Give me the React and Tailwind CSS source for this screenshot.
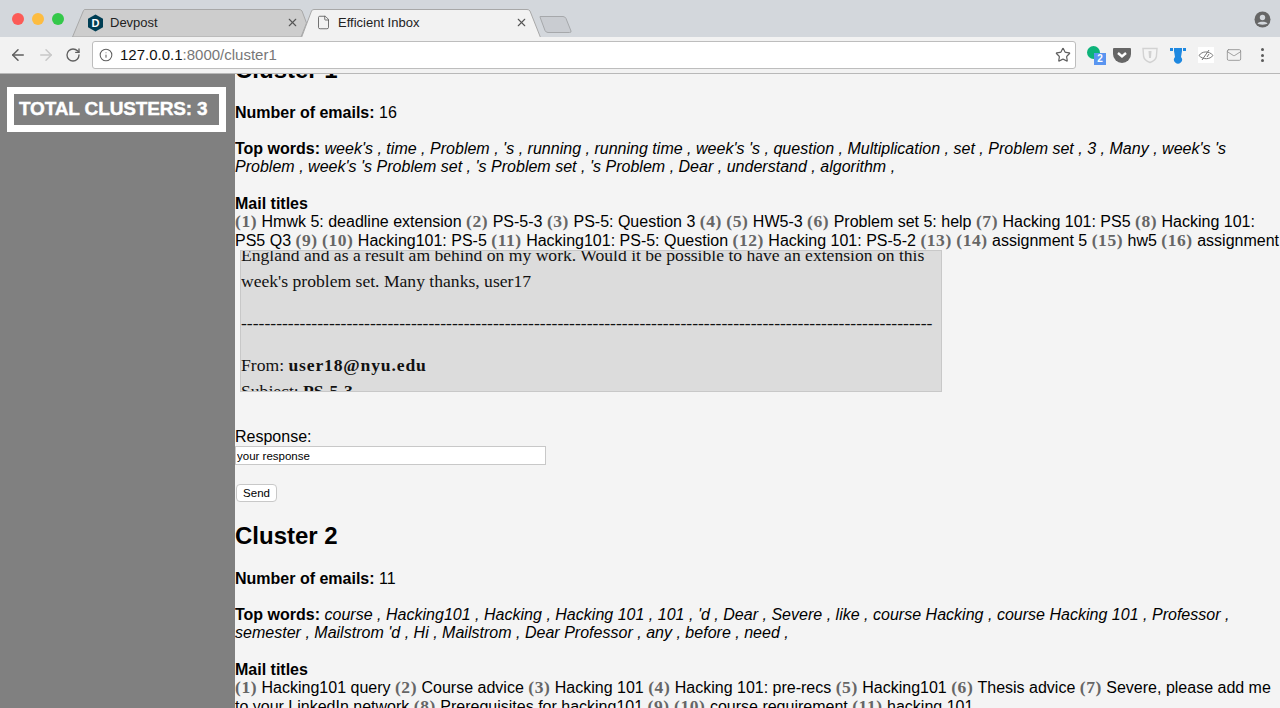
import React from "react";
import { ArrowLeft, ArrowRight, RotateCw, Info, Star, X, File, Mail } from "lucide-react";

const sans = "font-['Liberation_Sans',Arial,sans-serif]";

function Num({ n }) {
    return <b className="font-['Liberation_Serif',serif] text-[17.5px] leading-[16px] font-bold text-[#666666] tracking-[0.55px]">({n})</b>;
}

function Titles({ lines }) {
    return (
        <div className="whitespace-nowrap">
            {lines.map((line, i) => (
                <div key={i}>
                    {line.map(([n, title]) => (
                        <span key={n}><Num n={n} /> {title}{title ? " " : ""}</span>
                    ))}
                </div>
            ))}
        </div>
    );
}

function Cluster({ name, count, words, lines, children }) {
    return (
        <div>
            <h2 className="text-[24px] leading-[27.6px] font-bold">{name}</h2>
            <p className="mt-[20px]"><b>Number of emails:</b> {count}</p>
            <p className="mt-[18px]"><b>Top words:</b> <i className="tracking-[0.015px]">{words[0]}</i><br /><i className="tracking-[0.015px]">{words[1]}</i></p>
            <p className="mt-[18px]"><b>Mail titles</b></p>
            <Titles lines={lines} />
            {children}
        </div>
    );
}

function Tab({ fill, stroke, width, points, className, children }) {
    return (
        <div className={`relative h-[29px] flex items-center ${className}`} style={{ width }}>
            <svg className="absolute inset-0" width={width} height="29">
                <path d={points} fill={fill} stroke={stroke} strokeWidth="1" />
            </svg>
            {children}
        </div>
    );
}

function Extensions() {
    return (
        <div className="flex items-center w-[205px] pl-[4px] h-full">
            <div className="relative w-[28px] h-[24px]">
                <div className="absolute left-[7px] top-[3px] w-[13px] h-[13px] rounded-full bg-[#0db37a]" />
                <div className="absolute left-[14px] top-[10px] w-[12px] h-[12px] bg-[#5a95f0] text-white text-[10px] leading-[12px] text-center font-bold">2</div>
            </div>
            <svg width="28" height="24" viewBox="0 0 28 24">
                <path d="M6 5h16a1 1 0 0 1 1 1v5a9 9 0 0 1-18 0V6a1 1 0 0 1 1-1z" fill="#666" />
                <path d="M10 10l4 3.5 4-3.5" fill="none" stroke="#fff" strokeWidth="2.4" />
            </svg>
            <svg width="28" height="24" viewBox="0 0 28 24">
                <path d="M7 5.5h14l-.6 8c-.6 3-3.5 5-6.4 6-2.9-1-5.8-3-6.4-6z" fill="#f4f4f4" stroke="#d2d2d2" strokeWidth="1.4" />
                <path d="M12.500 8h3l-.5 7h-2z" fill="#d2d2d2" />
            </svg>
            <svg width="28" height="24" viewBox="0 0 28 24">
                <path d="M6 5h3v3H6zM19 5h3v3h-3zM10 5h8v3l-1 6a4 4 0 1 1-6 0l-1-6z" fill="#1e88e0" />
            </svg>
            <div className="w-[28px] flex justify-center">
                <div className="w-[16px] h-[16px] bg-white flex items-center justify-center">
                    <svg width="16" height="16" viewBox="0 0 16 16" fill="none" stroke="#777" strokeWidth="1">
                        <path d="M1 8.5c3-4.5 10-5 14 0-3 4-10 4.5-14 0z" />
                        <path d="M4 13L11 3M9 10l2-3" />
                    </svg>
                </div>
            </div>
            <div className="w-[28px] flex justify-center"><Mail size={16} strokeWidth={1.2} color="#8a8a8a" /></div>
            <div className="w-[28px] flex flex-col items-center gap-[2.5px]">
                <span className="w-[3px] h-[3px] rounded-full bg-[#5a5a5a]" />
                <span className="w-[3px] h-[3px] rounded-full bg-[#5a5a5a]" />
                <span className="w-[3px] h-[3px] rounded-full bg-[#5a5a5a]" />
            </div>
        </div>
    );
}

function BrowserBar() {
    return (
        <div className={`${sans} h-[74px] shrink-0 flex flex-col`}>
            <div className="h-[37px] bg-[#d3d7dc] flex items-end relative">
                <div className="flex gap-[8px] pl-[12px] self-start pt-[13px] w-[72px]">
                    <span className="w-[12px] h-[12px] shrink-0 rounded-full bg-[#fc5b57]" />
                    <span className="w-[12px] h-[12px] shrink-0 rounded-full bg-[#fdbc40]" />
                    <span className="w-[12px] h-[12px] shrink-0 rounded-full bg-[#34c84a]" />
                </div>
                <Tab width={235} fill="#cdcdcd" stroke="#a8a8a8" points="M0.5 29 L11.5 2.5 Q12 1.5 13 1.5 H227 Q229 1.5 230 3 L234.500 15 L229 29 Z">
                    <svg className="absolute left-[15px] top-[6px]" width="17" height="18" viewBox="0 0 17 18">
                        <path d="M8.5 0.5L16 4.8V13.2L8.5 17.5L1 13.2V4.8z" fill="#003e54" />
                    </svg>
                    <span className="absolute left-[15px] top-[6px] w-[17px] text-center text-white text-[11px] leading-[18px] font-bold">D</span>
                    <span className="absolute left-[38px] text-[13px] text-[#222]">Devpost</span>
                    <X className="absolute left-[214px] top-[8px]" size={13} color="#555" strokeWidth={2} />
                </Tab>
                <Tab width={240} className="-ml-[6px]" fill="#f2f2f2" stroke="#a8a8a8" points="M0.5 29.5 L10.5 3 Q11 1.5 13 1.5 H226 Q228 1.5 229 3 L239.5 29.5">
                    <File className="absolute left-[15px] top-[7px]" size={15} color="#555" strokeWidth={1.3} />
                    <span className="absolute left-[37px] text-[13px] text-[#222]">Efficient Inbox</span>
                    <X className="absolute left-[214px] top-[8px]" size={13} color="#555" strokeWidth={2} />
                </Tab>
                <svg className="-ml-[2px] mb-[3px]" width="34" height="19" viewBox="0 0 34 19">
                    <path d="M1 1.5H24q2 0 3 2L32 16q.5 1.5-1.5 1.5H9q-2 0-3-2L1 2z" fill="#c9ccd1" stroke="#a6a8ab" />
                </svg>
                <svg className="absolute right-[9px] top-[11px]" width="17" height="17" viewBox="0 0 17 17">
                    <circle cx="8.5" cy="8.5" r="8" fill="#666" />
                    <circle cx="8.5" cy="6.5" r="2.7" fill="#d3d7dc" />
                    <path d="M3.5 12.5c1-2.5 9-2.5 10 0-1.500 1.500-8.500 1.500-10 0z" fill="#d3d7dc" />
                </svg>
            </div>
            <div className="h-[37px] bg-[#f2f2f2] border-b border-[#b8b8b8] flex items-center">
                <div className="w-[92px] shrink-0 flex items-center pl-[9px] gap-[10px]">
                    <ArrowLeft size={18} color="#5f5f5f" strokeWidth={2} />
                    <ArrowRight size={18} color="#c8c8c8" strokeWidth={2} />
                    <RotateCw size={16} color="#5f5f5f" strokeWidth={2} />
                </div>
                <div className="w-[984px] h-[28px] shrink-0 bg-white border border-[#bdbdbd] rounded-[3px] flex items-center pl-[6px] pr-[4px]">
                    <Info size={14} color="#5f5f5f" strokeWidth={1.8} />
                    <span className="ml-[7px] text-[15px] text-[#111]">127.0.0.1<span className="text-[#777]">:8000/cluster1</span></span>
                    <Star className="ml-auto" size={16} color="#5f5f5f" strokeWidth={1.8} />
                </div>
                <Extensions />
            </div>
        </div>
    );
}

export default function App() {
    return (
        <div className="w-[1280px] h-[708px] overflow-hidden flex flex-col bg-[#f4f4f4]">
            <BrowserBar />
            <div className={`${sans} flex flex-1 min-h-0 text-[16px] leading-[18.4px] text-black`}>
                <div className="w-[235px] shrink-0 bg-[#808080] pt-[13px] pl-[7px]">
                    <div className="w-[219px] h-[45px] border-[7px] border-white pl-[5px] flex items-center text-white text-[19px] font-bold tracking-[-0.15px] [-webkit-text-stroke:0.4px_white] whitespace-nowrap">
                        TOTAL CLUSTERS: 3
                    </div>
                </div>
                <div className="flex-1 min-w-0 overflow-hidden">
                    <div className="-mt-[18px]">
                        <Cluster
                            name="Cluster 1"
                            count="16"
                            words={["week's , time , Problem , 's , running , running time , week's 's , question , Multiplication , set , Problem set , 3 , Many , week's 's", "Problem , week's 's Problem set , 's Problem set , 's Problem , Dear , understand , algorithm ,"]}
                            lines={[
                                [["1", "Hmwk 5: deadline extension"], ["2", "PS-5-3"], ["3", "PS-5: Question 3"], ["4", ""], ["5", "HW5-3"], ["6", "Problem set 5: help"], ["7", "Hacking 101: PS5"], ["8", "Hacking 101:"]],
                            ]}
                        >
                            <div className="whitespace-nowrap">
                                PS5 Q3 <Num n="9" /> <Num n="10" /> Hacking101: PS-5 <Num n="11" /> Hacking101: PS-5: Question <Num n="12" /> Hacking 101: PS-5-2 <Num n="13" /> <Num n="14" /> assignment 5 <Num n="15" /> hw5 <Num n="16" /> assignment
                            </div>
                            <div className="ml-[5px] w-[702px] h-[142px] bg-[#dcdcdc] border border-[#c8c8c8] overflow-hidden font-['Liberation_Serif',serif] text-[17.6px] leading-[26px] text-[#111] whitespace-nowrap">
                                <div className="-mt-[9px]">
                                    <p>England and as a result am behind on my work. Would it be possible to have an extension on this</p>
                                    <p>week's problem set. Many thanks, user17</p>
                                    <p className="mt-[16px]">{"-".repeat(118)}</p>
                                    <p className="mt-[16px]">From: <b className="tracking-[0.85px]">user18@nyu.edu</b></p>
                                    <p>Subject: <b>PS-5-3</b></p>
                                </div>
                            </div>
                            <div className="mt-[36px]">Response:</div>
                            <input readOnly value="your response" className="block w-[311px] h-[19px] bg-white border border-[#c8c8c8] px-[1px] text-[11.5px] text-black outline-none" />
                            <button className="block mt-[19px] ml-[1px] w-[41px] h-[18px] bg-white rounded-[4px] border border-[#c8c8c8] text-[11.5px] leading-[16px] text-black">Send</button>
                        </Cluster>
                        <div className="mt-[19.6px]">
                            <Cluster
                                name="Cluster 2"
                                count="11"
                                words={["course , Hacking101 , Hacking , Hacking 101 , 101 , 'd , Dear , Severe , like , course Hacking , course Hacking 101 , Professor ,", "semester , Mailstrom 'd , Hi , Mailstrom , Dear Professor , any , before , need ,"]}
                                lines={[
                                    [["1", "Hacking101 query"], ["2", "Course advice"], ["3", "Hacking 101"], ["4", "Hacking 101: pre-recs"], ["5", "Hacking101"], ["6", "Thesis advice"], ["7", "Severe, please add me"]],
                                ]}
                            >
                                <div className="whitespace-nowrap">
                                    to your LinkedIn network <Num n="8" /> Prerequisites for hacking101 <Num n="9" /> <Num n="10" /> course requirement <Num n="11" /> hacking 101
                                </div>
                            </Cluster>
                        </div>
                    </div>
                </div>
            </div>
        </div>
    );
}
